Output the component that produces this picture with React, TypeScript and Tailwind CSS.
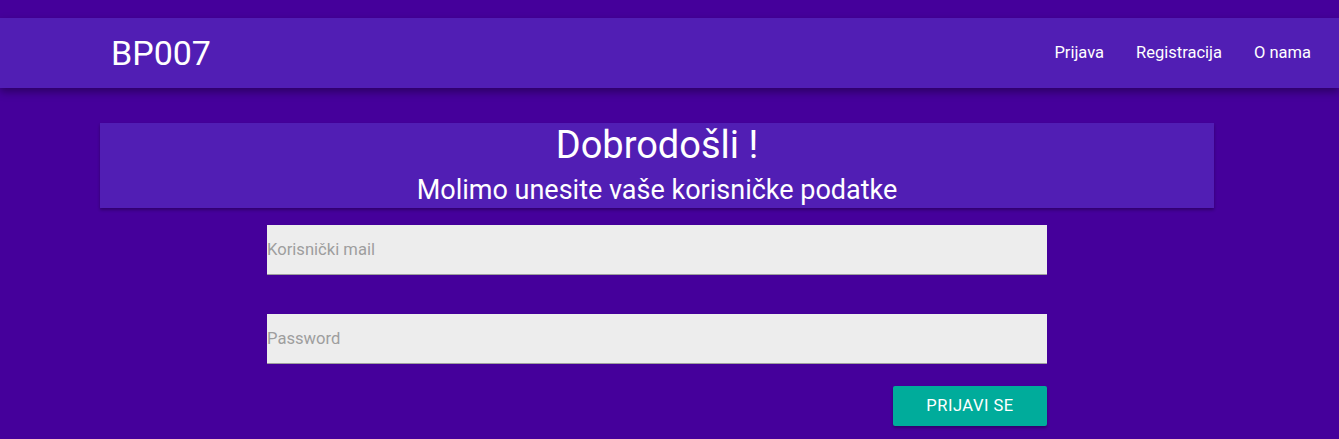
import React from "react";

export default function App() {
  return (
    <div
      className="w-[1339px] h-[439px] overflow-hidden bg-[#45009b] pt-[18px]"
      style={{ fontFamily: "Roboto, 'Liberation Sans', sans-serif" }}
    >
      <nav className="h-[70px] bg-[#511eb4] shadow-[0_4px_8px_rgba(0,0,0,0.35)] flex items-center justify-between pl-[111px] pr-[12px] relative z-10">
        <span className="text-white text-[34px] leading-none">BP007</span>
        <ul className="flex items-center text-white text-[16.5px]">
          <li className="px-[16px]">Prijava</li>
          <li className="px-[16px]">Registracija</li>
          <li className="px-[16px]">O nama</li>
        </ul>
      </nav>
      <div className="mt-[35px] ml-[100px] w-[1114px] h-[85px] bg-[#511eb4] shadow-[0_2px_3px_rgba(0,0,0,0.3)] flex flex-col items-center text-white">
        <h1 className="text-[38px] leading-[40px] mt-[2px]">Dobrodošli !</h1>
        <h2 className="text-[27px] leading-[30px] mt-[10px]">Molimo unesite vaše korisničke podatke</h2>
      </div>
      <form className="w-[780px] ml-[267px] mt-[17px] flex flex-col">
        <input
          placeholder="Korisnički mail"
          className="h-[50px] bg-[#ededed] border-b border-[#9e9e9e] text-[16.6px] placeholder-[#9e9e9e] outline-none"
        />
        <input
          type="password"
          placeholder="Password"
          className="mt-[39px] h-[50px] bg-[#ededed] border-b border-[#9e9e9e] text-[16.6px] placeholder-[#9e9e9e] outline-none"
        />
        <div className="flex justify-end mt-[22px]">
          <button
            type="button"
            className="w-[154px] h-[40px] bg-[#00ac9b] text-white text-[16.5px] uppercase tracking-[0.5px] rounded-[2px] shadow-[0_2px_3px_rgba(0,0,0,0.3)]"
          >
            Prijavi se
          </button>
        </div>
      </form>
    </div>
  );
}
